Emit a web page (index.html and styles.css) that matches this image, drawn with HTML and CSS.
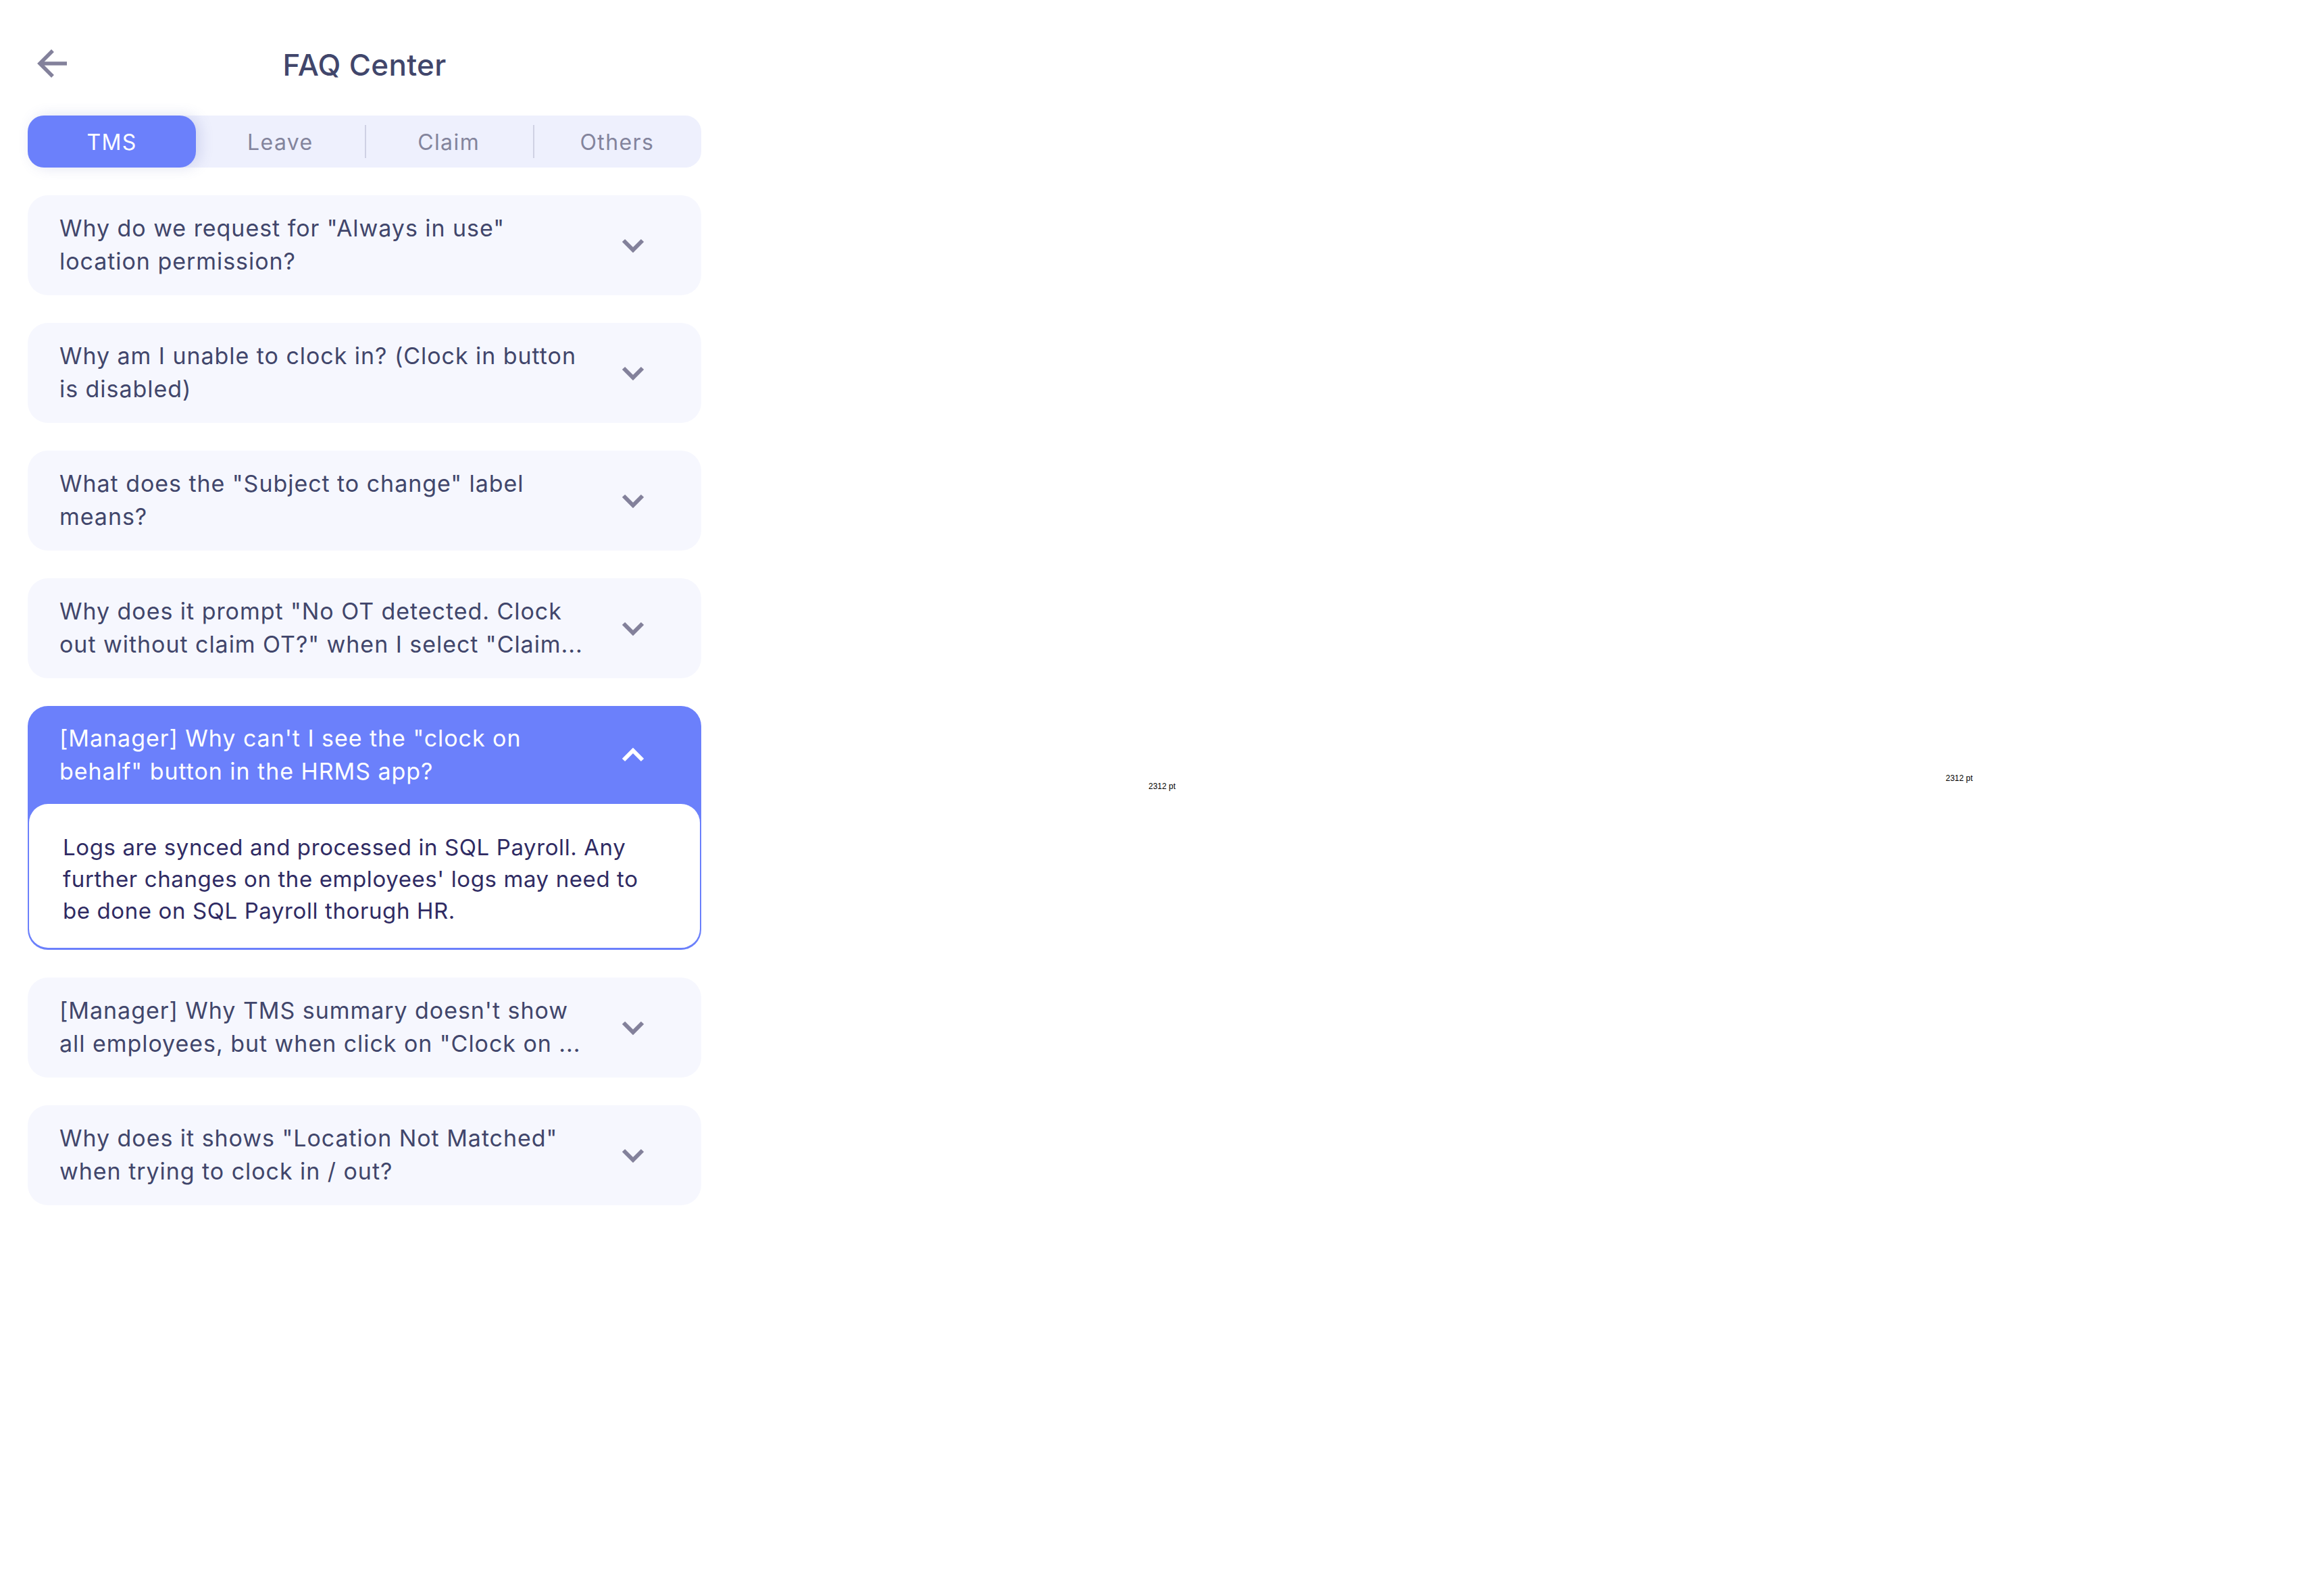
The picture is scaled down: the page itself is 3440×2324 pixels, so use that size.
FILE: index.html
```html
<!DOCTYPE html>
<html lang="en">

<head>
  <meta charset="UTF-8">
  <meta name="viewport" content="width=device-width, initial-scale=1.0">
  <title>FAQ Center</title>
  <link rel="stylesheet" href="styles.css">
</head>

<body>
  <div class="panel">
    <header class="top">
      <svg class="back" viewBox="0 0 46 44" width="46" height="44">
        <path d="M44 22H4M23 3L4 22l19 19" fill="none" stroke="#83819b" stroke-width="5.5" />
      </svg>
      <h1 class="title">FAQ Center</h1>
    </header>

    <div class="tabs">
      <div class="tab tab-on">TMS</div>
      <div class="tab">Leave</div>
      <div class="tab tab-line">Claim</div>
      <div class="tab tab-line">Others</div>
    </div>

    <div class="list">
      <div class="item">
        <p class="ask">Why do we request for "Always in use" location permission?</p>
        <svg class="chev" viewBox="0 0 34 22" width="34" height="22"><path d="M3 4l14 14L31 4" /></svg>
      </div>
      <div class="item">
        <p class="ask">Why am I unable to clock in? (Clock in button is disabled)</p>
        <svg class="chev" viewBox="0 0 34 22" width="34" height="22"><path d="M3 4l14 14L31 4" /></svg>
      </div>
      <div class="item">
        <p class="ask">What does the "Subject to change" label means?</p>
        <svg class="chev" viewBox="0 0 34 22" width="34" height="22"><path d="M3 4l14 14L31 4" /></svg>
      </div>
      <div class="item">
        <p class="ask">Why does it prompt "No OT detected. Clock out without claim OT?" when I select "Claim...</p>
        <svg class="chev" viewBox="0 0 34 22" width="34" height="22"><path d="M3 4l14 14L31 4" /></svg>
      </div>

      <div class="open">
        <div class="item item-on">
          <p class="ask">[Manager] Why can't I see the "clock on behalf" button in the HRMS app?</p>
          <svg class="chev" viewBox="0 0 34 22" width="34" height="22"><path d="M3 18L17 4l14 14" /></svg>
        </div>
        <div class="answer">Logs are synced and processed in SQL Payroll. Any further changes on the employees' logs may need to be done on SQL Payroll thorugh HR.</div>
      </div>

      <div class="item">
        <p class="ask">[Manager] Why TMS summary doesn't show all employees, but when click on "Clock on ...</p>
        <svg class="chev" viewBox="0 0 34 22" width="34" height="22"><path d="M3 4l14 14L31 4" /></svg>
      </div>
      <div class="item">
        <p class="ask">Why does it shows "Location Not Matched" when trying to clock in / out?</p>
        <svg class="chev" viewBox="0 0 34 22" width="34" height="22"><path d="M3 4l14 14L31 4" /></svg>
      </div>
    </div>
  </div>

  <span class="pt pt-a">2312 pt</span>
  <span class="pt pt-b">2312 pt</span>
</body>

</html>
```

FILE: styles.css
```css
* {
  box-sizing: border-box;
}

body {
  margin: 0;
  background: #fff;
  font-family: Inter, "Noto Sans", sans-serif;
  min-height: 2324px;
  position: relative;
}

.panel {
  width: 997px;
  margin-left: 41px;
  padding-top: 69px;
}

.top {
  height: 73px;
  margin-bottom: 29px;
  display: flex;
  align-items: flex-start;
  justify-content: center;
  position: relative;
}

.back {
  position: absolute;
  left: 14px;
  top: 3px;
}

.title {
  margin: 0;
  font-size: 44px;
  line-height: 54px;
  font-weight: 500;
  color: #41466b;
  letter-spacing: 0.3px;
}

.tabs {
  display: flex;
  height: 77px;
  background: #eef0fd;
  border-radius: 24px;
}

.tab {
  flex: 1;
  display: flex;
  align-items: center;
  justify-content: center;
  padding-top: 2px;
  font-size: 32px;
  letter-spacing: 1.4px;
  color: #83849c;
  position: relative;
}

.tab-line::before {
  content: "";
  position: absolute;
  left: 0;
  top: 14px;
  bottom: 14px;
  width: 2px;
  background: #cfd1e4;
}

.tab-on {
  background: #6b80fb;
  color: #fff;
  border-radius: 24px;
  box-shadow: 6px 0 20px rgba(80, 90, 180, 0.18);
}

.list {
  margin-top: 41px;
  display: flex;
  flex-direction: column;
  gap: 41px;
}

.item {
  height: 148px;
  padding: 0 84px 0 47px;
  background: #f6f7fe;
  border-radius: 30px;
  display: flex;
  align-items: center;
  justify-content: space-between;
}

.ask {
  margin: -2px 0 0;
  width: 780px;
  font-size: 34px;
  line-height: 49px;
  letter-spacing: 0.95px;
  color: #41466b;
}

.chev {
  flex: none;
}

.chev path {
  fill: none;
  stroke: #83819b;
  stroke-width: 6;
}

.open {
  background: #6b80fb;
  border-radius: 30px;
  padding-bottom: 3px;
}

.item-on {
  background: none;
  height: 145px;
}

.item-on .ask {
  color: #fff;
}

.item-on .chev path {
  stroke: #fff;
}

.answer {
  margin: 0 2px;
  height: 213px;
  padding: 41px 65px 0 50px;
  background: #fff;
  border-radius: 28px;
  font-size: 33px;
  line-height: 47px;
  letter-spacing: 0.6px;
  color: #2f2b63;
}

.pt {
  position: absolute;
  font-family: "Liberation Sans", Arial, sans-serif;
  font-size: 12px;
  line-height: 14px;
  color: #000;
}

.pt-a {
  left: 1700px;
  top: 1157px;
}

.pt-b {
  left: 2880px;
  top: 1145px;
}
```
